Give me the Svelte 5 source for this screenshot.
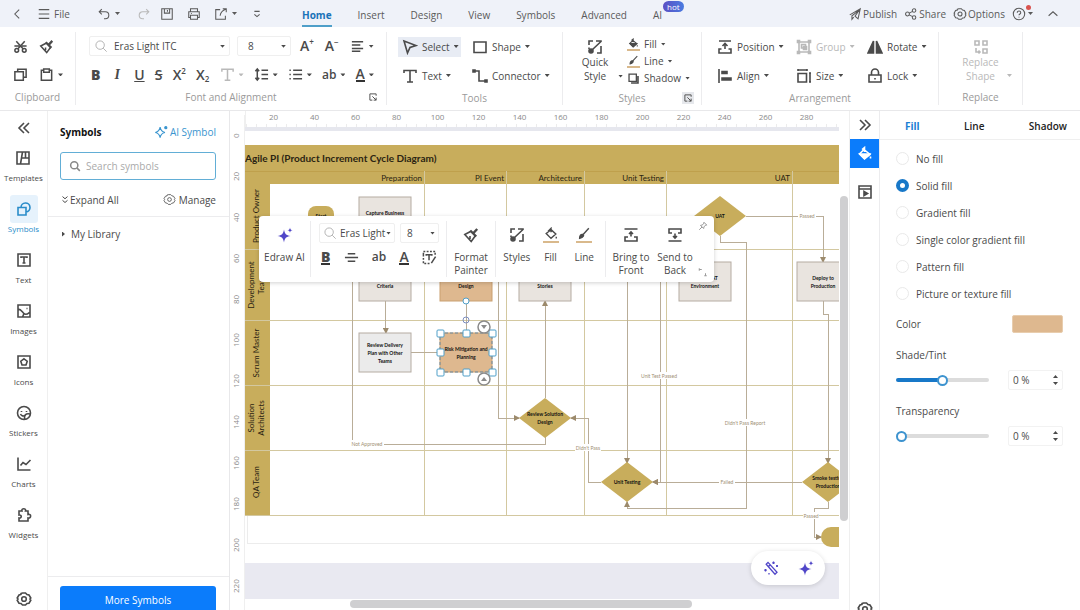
<script lang="ts">
  interface Tool {
    icon: string;
    name: string;
    menu?: boolean;
    off?: boolean;
  }

  const icons: Record<string, string> = {
    back: '<path d="M10.500 3 5.500 8l5 5"/>',
    menu: '<path d="M2 3h12M2 8h12M2 13h12"/>',
    undo: '<path d="M5.500 2.500 2.500 5.500l3 3M3 5.500h6.500a4 4 0 0 1 0 8H8"/>',
    redo: '<path d="m10.500 2.500 3 3-3 3M13 5.500H6.500a4 4 0 0 0 0 8H8"/>',
    save: '<path d="M2 2h12v12H2zM5 2v5h6V2M8.500 3.500v2"/>',
    print: '<path d="M4 5V2h8v3M4 12H2V5.500h12V12h-2M4 9.500h8V14H4zM4.500 7.500h1"/>',
    export: '<path d="M7 3H2v11h11v-4M10 2h4v4M13.500 2.500C9 4 7.500 6 7 10"/>',
    more: '<path d="M5 5h6M5 8.500l3 2.500 3-2.500"/>',
    publish: '<path d="m2 9 12-7-2.500 11.500L8 10.500l5-7-8.500 6.500v4l2-2.500"/>',
    share: '<circle cx="4" cy="8" r="2.200"/><circle cx="11.500" cy="4" r="2"/><circle cx="11.500" cy="12" r="2"/><path d="m6 7 3.800-2M6 9l3.800 2"/>',
    gear: '<path d="M5 2.500 6.500 2h3l1.500 1.500 2 .5 1.800 3-.8 1 .8 1.200-1.800 3-2 .3L9.500 14h-3L5 12.500l-2-.3-1.800-3L2 8l-.8-1L3 4l2-.5z"/><circle cx="8" cy="8" r="2.300"/>',
    help: '<circle cx="8" cy="8" r="6.500"/><path d="M6 6.500c0-2.500 4-2.500 4 0C10 8 8 8 8 9.500M8 11v1"/>',
    up: '<path d="m3 10 5-4.500 5 4.500"/>',
    cut: '<circle cx="4" cy="12" r="2"/><circle cx="12" cy="12" r="2"/><path d="m5.300 10.500 7.200-8M10.700 10.500l-7.200-8M1.500 7.500h5M9.500 7.500h5"/>',
    painter: '<path d="M7.500 4.500 1.800 7.500l6.400 7 4-5.500M7 9v3"/><path d="m7.200 3.500 6 6M10.500 6 14.200 2" stroke-width="2.400"/>',
    copy: '<path d="M2 5h9v9H2zM5 5V2.500h9V11h-3"/>',
    paste: '<path d="M4.500 3.500H2.500V14h11V3.500h-2M5 2h6v3.500H5z"/>',
    search: '<circle cx="7" cy="7" r="4.800"/><path d="m10.500 10.500 4 4"/>',
    align: '<path d="M2 3h12M2 6.500h9M2 10h12M2 13h9"/>',
    center: '<path d="M4 4h8M1 8h14M4 12h8"/>',
    spacing: '<path d="M3.500 2v12M1.500 4.500 3.500 2l2 2.500M1.500 11.500l2 2.500 2-2.500M8 3.500h7M8 8h7M8 12.500h7"/>',
    list: '<path d="M5.500 3.500H15M5.500 8H15M5.500 12.500H15M1.500 3.500H3M1.500 8H3M1.500 12.500H3"/>',
    launcher: '<path d="M13 6V3H3v10h4M7 7l6 6M13 9v4H9"/>',
    pointer: '<path d="m2 2 12 4.500-6 2L5.500 14z"/>',
    rect: '<path d="M2 3h12v10.500H2z"/>',
    text: '<path d="M2 5V2.500h12V5M8 2.500V14M5 14h6"/>',
    connector: '<path d="M2 3h5v10h6"/><path d="M1 2h2v2H1zM13 12h2v2h-2z" fill="currentColor"/>',
    quick: '<path d="M2 6V2h4M9 2h5v1M2 8.500V10M14 7v7h-4M5.500 10.500 14 2.500"/><circle cx="4" cy="12" r="2" fill="currentColor"/>',
    bucket: '<path d="m7 3.500 6 5-5.500 4.500L2.500 8zM7.500 6V1.500L5 3.500M13.500 10.500v2"/><path d="M3 8h9.500l-5 4.500z" fill="currentColor"/>',
    bucketLine: '<path d="m8 3 5.500 5L8 13 2.500 7.500zM8 6V1.500L4.500 5M14 11v2"/>',
    brush: '<path d="m7 8.500 6.500-7"/><path d="M3 13c0-3 1.500-5 3.500-4.500S7.500 12 3 13z" fill="currentColor"/>',
    shadow: '<path d="M2.500 2.500h9v9h-9z"/><path d="M5 13.500h8.500V5" stroke-width="2"/>',
    position: '<path d="M2 2h12M8 10V4.500M5.500 7 8 4.500 10.500 7M4.500 10H2v4h12v-4h-2.500"/>',
    toFront: '<path d="M1.500 2h13M8 9.500V5M6 7l2-2 2 2M5 10H2v4h12v-4h-3"/>',
    toBack: '<path d="M1.500 14h13M8 6.500V11M6 9l2 2 2-2M5 6H2V2h12v4h-3"/>',
    alignLeft: '<path d="M2 1v14"/><path d="M5 3.500h5v2H5zM5 10h9v2H5z" fill="currentColor"/>',
    group: '<path d="M3 3h10v10H3zM1.500 1.500h2v2h-2zM12.500 1.500h2v2h-2zM1.500 12.500h2v2h-2zM12.500 12.500h2v2h-2zM5.500 5.500h4v3.500h-4zM7.500 7.500h3v3h-3z"/>',
    size: '<path d="M2 5.500h8.500V14H2zM2 2h9M2 1v2M11 1v2M14 5v9M13 5h2M13 14h2"/>',
    rotate: '<path d="M6.500 2v12H1zM9.500 2v12H15z" fill="currentColor"/>',
    lock: '<path d="M2 7h12v7H2zM4.500 7V4.500a3.500 3.500 0 0 1 7 0V7M8 10v1.500"/>',
    replace: '<path d="M2 2h4v4H2zM10 2h4v4h-4zM10 10h4v4h-4zM3 9v4h4M5.500 11.500 7 13l-1.500 1.500"/>',
    left2: '<path d="M8 3 3 8l5 5M13 3 8 8l5 5"/>',
    right2: '<path d="m3 3 5 5-5 5M8 3l5 5-5 5"/>',
    templates: '<path d="M2 2h12v12H2zM7.500 2 5.500 14M6.500 8H14M10.500 8V2"/>',
    symbols: '<path d="M2 6.500h8V14H2zM5 6.500a4.500 4.500 0 1 1 5 4.500"/>',
    textBox: '<path d="M2 2h12v12H2zM5 6V5h6v1M8 5v6M6.500 11h3"/>',
    images: '<path d="M2 2h12v12H2zM2 6c3 0 4 2.500 6 4.500s4 0 6-1.500M8 10.500 6.500 14"/><path d="M10.500 5.500h1"/>',
    iconBox: '<path d="M2 2h12v12H2zM8 4.800l3.200 2.400-1.200 3.800H6L4.800 7.200z"/>',
    stickers: '<path d="M14.500 8A6.500 6.500 0 1 0 8 14.500c4 0 6.500-3 6.500-6.500zM14 9c-4-1-6 1-5.500 5M5.500 6v1M10.500 6v1M4.500 9c1 2 3 2.500 4.500 1.500"/>',
    charts: '<path d="M2 1.500V14h12.500M4.500 9.500 7 6.500l3 2L14.500 4"/>',
    widgets: '<path d="M3 4h3c-1-3 4.500-3 3.500 0H12v3.500c3.500-1 3.500 4 0 3.500V14H3v-3c3 .5 3-3.500 0-3z"/>',
    sparkle: '<path d="M7 2.500c.6 4 1.800 5.200 5.500 6-3.700.8-4.900 2-5.500 6-.6-4-1.800-5.200-5.500-6 3.700-.8 4.900-2 5.500-6z"/><circle cx="13.500" cy="3" r="1.200" fill="currentColor"/>',
    star: '<path d="M7 2.500C7.800 7 9 8.200 13.500 9 9 9.800 7.800 11 7 15.500 6.200 11 5 9.800.5 9 5 8.200 6.200 7 7 2.500zM13 .5c.3 2 .8 2.400 2.600 2.700-1.800.3-2.300.8-2.600 2.600-.3-1.800-.8-2.300-2.600-2.600C12.200 2.900 12.700 2.500 13 .5z" fill="currentColor" stroke="none"/>',
    wand: '<path d="m3.200 4.200 1.800-1.800 9 9.800-2 2zM5.500 6.500l1.800-1.800M10.500 1.500v2.500M9.200 2.800h2.600M14 5v2M13 6h2M2.500 9v2.500M1.200 10.200h2.600M6 13v1.500"/>',
    expand: '<path d="m4 2.500 4 3.500 4-3.500M4 8.500l4 3.500 4-3.500"/>',
    textFrame: '<path d="M1.500 5V1.500H14V5M1.500 5v9.500H9" stroke-dasharray="2 1.500"/><path d="M4.500 6V5h6v1M7.500 5v6M14.500 7 10 14"/>',
    play: '<path d="M2 2h12v12H2zM2 5h12"/><path d="m7 7.500 3.500 2L7 11.500z" fill="currentColor"/>',
    pin: '<path d="M9.500 2 14 6.500l-2.500.5-2 2.500L9 12 4 7l2.500-.5L9 4.500zM6.500 9.500 2 14"/>',
    resize: '<path d="M2 2v4M2 4h4M10 14h4M12 10v4"/>',
  };

  const quickTools: Tool[] = [
    { icon: 'undo', name: 'Undo', menu: true },
    { icon: 'redo', name: 'Redo', off: true },
    { icon: 'save', name: 'Save' },
    { icon: 'print', name: 'Print' },
    { icon: 'export', name: 'Export', menu: true },
    { icon: 'more', name: 'Customize' },
  ];

  const tabs = ['Home', 'Insert', 'Design', 'View', 'Symbols', 'Advanced', 'AI'];

  const arrange: Tool[] = [
    { icon: 'position', name: 'Position' },
    { icon: 'group', name: 'Group', off: true },
    { icon: 'rotate', name: 'Rotate' },
    { icon: 'alignLeft', name: 'Align' },
    { icon: 'size', name: 'Size' },
    { icon: 'lock', name: 'Lock' },
  ];

  const rail: Tool[] = [
    { icon: 'templates', name: 'Templates' },
    { icon: 'symbols', name: 'Symbols' },
    { icon: 'textBox', name: 'Text' },
    { icon: 'images', name: 'Images' },
    { icon: 'iconBox', name: 'Icons' },
    { icon: 'stickers', name: 'Stickers' },
    { icon: 'charts', name: 'Charts' },
    { icon: 'widgets', name: 'Widgets' },
  ];

  const fills = ['No fill', 'Solid fill', 'Gradient fill', 'Single color gradient fill', 'Pattern fill', 'Picture or texture fill'];

  const rulerX = Array.from({ length: 14 }, (_, i) => (i + 1) * 20);
  const rulerY = Array.from({ length: 12 }, (_, i) => i * 20);

  // diagram geometry
  const rowLines = [122, 193, 258, 323, 388];
  const columns = [
    { x: 179, label: 'Preparation' },
    { x: 261, label: 'PI Event' },
    { x: 339, label: 'Architecture' },
    { x: 421, label: 'Unit Testing' },
    { x: 547, label: 'UAT' },
  ];
  const lanes = [
    { y: 89, lines: ['Product Owner'] },
    { y: 158, lines: ['Development', 'Team'] },
    { y: 226, lines: ['Scrum Master'] },
    { y: 291, lines: ['Solution', 'Architects'] },
    { y: 355, lines: ['QA Team'] },
  ];
  const boxes = [
    { x: 114, y: 70, kind: 'box', lines: ['Capture Business', 'Needs'] },
    { x: 114, y: 135, kind: 'box', lines: ['Acceptance', 'Criteria'] },
    { x: 195, y: 135, kind: 'tan', lines: ['Solution', 'Design'] },
    { x: 274, y: 135, kind: 'box', lines: ['Design', 'Stories'] },
    { x: 434, y: 135, kind: 'box', lines: ['Create UAT', 'Environment'] },
    { x: 552, y: 135, kind: 'box', lines: ['Deploy to', 'Production'] },
    { x: 114, y: 206, kind: 'pale', lines: ['Review Delivery', 'Plan with Other', 'Teams'] },
    { x: 195, y: 206, kind: 'tan', lines: ['Risk Mitigation and', 'Planning'] },
  ];
  const diamonds = [
    { x: 475, y: 89, lines: ['UAT'] },
    { x: 300, y: 291, lines: ['Review Solution', 'Design'] },
    { x: 382, y: 355, lines: ['Unit Testing'] },
    { x: 583, y: 355, lines: ['Smoke testing', 'Production'] },
  ];
  const arrows = [
    'M140 174L141 206',
    'M253 110V291H274',
    'M300 271V174',
    'M382 110V336',
    'M415 110V355H408',
    'M557 355H408',
    'M356 355H343V291H326',
    'M475 109V115H501V381H382V375',
    'M501 89H578V135',
    'M578 174V187H583V336',
    'M583 375V381H569V410H576',
  ];
  const lines = ['M107 110V317H300V310', 'M166 225H195', 'M221 174V206'];
  const notes = [
    { x: 562, y: 89, w: 18, text: 'Passed' },
    { x: 414, y: 249, w: 40, text: 'Unit Test Passed' },
    { x: 500, y: 296, w: 44, text: "Didn't Pass Report" },
    { x: 343, y: 321, w: 26, text: "Didn't Pass" },
    { x: 482, y: 355, w: 16, text: 'Failed' },
    { x: 566, y: 389, w: 16, text: 'Passed' },
    { x: 122, y: 317, w: 34, text: 'Not Approved' },
  ];
  const handles = [[195, 206], [221, 206], [247, 206], [195, 225], [247, 225], [195, 245], [221, 245], [247, 245]];

  let activeTab = $state('Home');
  let activeRail = $state('Symbols');
  let activeProp = $state('Fill');
  let fill = $state('Solid fill');
  let shade = $state(0);
  let transparency = $state(0);
  let query = $state('');

  const clamp = (v: number, min: number, max: number) => Math.min(max, Math.max(min, v));
</script>

{#snippet icon(name: string, cls = '')}
  <svg class="icon {cls}" viewBox="0 0 16 16" aria-hidden="true">{@html icons[name]}</svg>
{/snippet}

{#snippet caret()}
  <span class="caret"></span>
{/snippet}

{#snippet amount(label: string, value: number, step: (d: number) => void)}
  <div class="amount">
    <input type="text" aria-label="{label} value" value="{value} %" readonly />
    <div class="steps">
      <button aria-label="Increase {label}" onclick={() => step(1)}><span class="caret flip"></span></button>
      <button aria-label="Decrease {label}" onclick={() => step(-1)}>{@render caret()}</button>
    </div>
  </div>
{/snippet}

<div class="app">
  <header class="titlebar">
    <button class="back" aria-label="Back">{@render icon('back')}</button>
    <button class="file">{@render icon('menu')}File</button>
    <div class="quick">
      {#each quickTools as tool}
        <button class:off={tool.off} aria-label={tool.name}>
          {@render icon(tool.icon)}{#if tool.menu}{@render caret()}{/if}
        </button>
      {/each}
    </div>
    <nav class="tabs">
      {#each tabs as tab}
        <button class:active={activeTab === tab} onclick={() => (activeTab = tab)}>
          {tab}{#if tab === 'AI'}<span class="hot">hot</span>{/if}
        </button>
      {/each}
    </nav>
    <div class="account">
      <button>{@render icon('publish')}Publish</button>
      <button>{@render icon('share')}Share</button>
      <button>{@render icon('gear')}Options</button>
      <button class="help" aria-label="Help">{@render icon('help')}{@render caret()}<i class="dot"></i></button>
      <button class="collapse" aria-label="Collapse ribbon">{@render icon('up')}</button>
    </div>
  </header>

  <section class="ribbon">
    <div class="group clipboard">
      <div class="row">
        <button aria-label="Cut">{@render icon('cut')}</button>
        <button aria-label="Format painter">{@render icon('painter')}</button>
      </div>
      <div class="row">
        <button aria-label="Copy">{@render icon('copy')}</button>
        <button aria-label="Paste">{@render icon('paste')}{@render caret()}</button>
      </div>
      <div class="title">Clipboard</div>
    </div>

    <div class="group font">
      <div class="row">
        <div class="select family">
          {@render icon('search')}
          <select aria-label="Font family"><option>Eras Light ITC</option></select>
          {@render caret()}
        </div>
        <div class="select size">
          <select aria-label="Font size"><option>8</option></select>
          {@render caret()}
        </div>
        <button class="glyph" aria-label="Increase font size">A<sup>+</sup></button>
        <button class="glyph" aria-label="Decrease font size">A<sup>−</sup></button>
        <button aria-label="Alignment">{@render icon('align')}{@render caret()}</button>
      </div>
      <div class="row formats">
        <button class="glyph" aria-label="Bold"><b>B</b></button>
        <button class="glyph" aria-label="Italic"><i>I</i></button>
        <button class="glyph" aria-label="Underline"><u>U</u></button>
        <button class="glyph" aria-label="Strikethrough"><s>S</s></button>
        <button class="glyph" aria-label="Superscript">X<sup>2</sup></button>
        <button class="glyph" aria-label="Subscript">X<sub>2</sub></button>
        <button class="off" aria-label="Text direction">{@render icon('text')}{@render caret()}</button>
        <button aria-label="Line spacing">{@render icon('spacing')}{@render caret()}</button>
        <button aria-label="Bullets">{@render icon('list')}{@render caret()}</button>
        <button class="glyph case" aria-label="Case">ab{@render caret()}</button>
        <button class="glyph" aria-label="Font color"><span class="inked">A</span>{@render caret()}</button>
      </div>
      <div class="title">Font and Alignment<button class="launch" aria-label="Font settings">{@render icon('launcher')}</button></div>
    </div>

    <div class="group tools">
      <div class="grid">
        <button class="tool picked">{@render icon('pointer')}Select{@render caret()}</button>
        <button class="tool">{@render icon('rect')}Shape{@render caret()}</button>
        <button class="tool">{@render icon('text')}Text{@render caret()}</button>
        <button class="tool">{@render icon('connector')}Connector{@render caret()}</button>
      </div>
      <div class="title">Tools</div>
    </div>

    <div class="group styles">
      <div class="split">
        <button class="tall">{@render icon('quick')}<span>Quick</span><span>Style{@render caret()}</span></button>
        <div class="stack">
          <button class="tool">{@render icon('bucket', 'under')}Fill{@render caret()}</button>
          <button class="tool">{@render icon('brush', 'under')}Line{@render caret()}</button>
          <button class="tool">{@render icon('shadow')}Shadow{@render caret()}</button>
        </div>
      </div>
      <div class="title">Styles<button class="launch shaded" aria-label="Style settings">{@render icon('launcher')}</button></div>
    </div>

    <div class="group arrange">
      <div class="grid">
        {#each arrange as tool}
          <button class="tool" class:off={tool.off}>{@render icon(tool.icon)}{tool.name}{@render caret()}</button>
        {/each}
      </div>
      <div class="title">Arrangement</div>
    </div>

    <div class="group replace">
      <button class="tall off">{@render icon('replace')}<span>Replace</span><span>Shape{@render caret()}</span></button>
      <div class="title">Replace</div>
    </div>
  </section>

  <div class="work">
    <nav class="rail">
      <button class="fold" aria-label="Collapse panel">{@render icon('left2')}</button>
      {#each rail as item}
        <button class="item" class:active={activeRail === item.name} onclick={() => (activeRail = item.name)}>
          <span class="tile">{@render icon(item.icon)}</span>
          {item.name}
        </button>
      {/each}
      <button class="settings" aria-label="Settings">{@render icon('gear')}</button>
    </nav>

    <aside class="symbols">
      <div class="head">
        <h2>Symbols</h2>
        <a href="#ai">{@render icon('sparkle')}AI Symbol</a>
      </div>
      <label class="search">
        {@render icon('search')}
        <input type="text" placeholder="Search symbols" aria-label="Search symbols" bind:value={query} />
      </label>
      <div class="actions">
        <button>{@render icon('expand', 'small')}Expand All</button>
        <button>{@render icon('gear')}Manage</button>
      </div>
      <div class="library">
        <button><span class="caret side-caret"></span>My Library</button>
      </div>
      <div class="foot"><button>More Symbols</button></div>
    </aside>

    <main class="canvas">
      <div class="ruler-x">
        {#each rulerX as n}<span>{n}</span>{/each}
      </div>
      <div class="ruler-y">
        {#each rulerY as n}<span>{n}</span>{/each}
      </div>
      <div class="sheet">
        <svg class="diagram" role="img" aria-label="Agile PI diagram">
          <defs>
            <marker id="arrow" viewBox="0 0 6 6" refX="5" refY="3" markerWidth="6" markerHeight="6" orient="auto-start-reverse">
              <path d="M0 0 6 3 0 6z" fill="#9c8a6c" />
            </marker>
          </defs>
          <rect width="100%" height="4" fill="#e6e7ee" />
          <rect y="436" width="100%" height="100%" fill="#e9e9f1" />
          <path class="page-edge" d="M2 388V416H590" />

          <rect class="band" y="18" width="100%" height="39" />
          <rect class="band" y="57" width="25" height="331" />
          <text class="name" x="0" y="35">Agile PI (Product Increment Cycle Diagram)</text>
          <path class="edge" d="M0 44H2000" />
          {#each rowLines as y}<path class="lane-line" d="M0 {y}H2000" />{/each}
          {#each columns as col}
            <path class="lane-line" d="M{col.x} 44V388" />
            <text class="lane" x={col.x - 2} y="54" text-anchor="end">{col.label}</text>
          {/each}
          {#each lanes as lane}
            {#each lane.lines as line, i}
              <text class="lane" transform="translate({14 + (i * 2 - lane.lines.length + 1) * 5} {lane.y}) rotate(-90)" text-anchor="middle">{line}</text>
            {/each}
          {/each}

          {#each lines as d}<path class="link" {d} />{/each}
          {#each arrows as d}<path class="link" {d} marker-end="url(#arrow)" />{/each}

          <rect class="band" x="63" y="79" width="26" height="20" rx="8" />
          <text class="tag" x="76" y="91">Start</text>
          <rect class="band" x="576" y="400" width="52" height="20" rx="10" />

          {#each boxes as b}
            <rect class={b.kind} x={b.x} y={b.y} width="52" height="39" />
            {#each b.lines as line, i}
              <text class="tag" x={b.x + 26} y={b.y + 22 + (i * 2 - b.lines.length + 1) * 4}>{line}</text>
            {/each}
          {/each}
          {#each diamonds as d}
            <path class="band" d="M{d.x - 26} {d.y}l26-20 26 20-26 20z" />
            {#each d.lines as line, i}
              <text class="tag" x={d.x} y={d.y + 2 + (i * 2 - d.lines.length + 1) * 4}>{line}</text>
            {/each}
          {/each}
          {#each notes as n}
            <rect x={n.x - n.w / 2} y={n.y - 4} width={n.w} height="7" fill="#fff" />
            <text class="note" x={n.x} y={n.y + 2}>{n.text}</text>
          {/each}

          <circle class="handle" cx="221" cy="174" r="3" />
          <circle class="spin" cx="221" cy="193" r="3" />
          <rect class="outline" x="195" y="206" width="52" height="39" />
          {#each handles as [x, y]}
            <rect class="handle" x={x - 3} y={y - 3} width="7" height="7" rx="1" />
          {/each}
          <g class="nudge">
            <circle cx="239" cy="200" r="6" /><path d="M236 198h6l-3 4z" />
            <circle cx="239" cy="252" r="6" /><path d="M236 254h6l-3-4z" />
          </g>
        </svg>
      </div>
      <div class="track-y"><div class="thumb"></div></div>
      <div class="track-x"><div class="thumb"></div></div>

      <div class="floater">
        <button class="big ai">{@render icon('star')}<span>Edraw AI</span></button>
        <div class="fonts">
          <div class="row">
            <div class="select family">
              {@render icon('search')}
              <select aria-label="Shape font"><option>Eras Light</option></select>
              {@render caret()}
            </div>
            <div class="select size">
              <select aria-label="Shape font size"><option>8</option></select>
              {@render caret()}
            </div>
          </div>
          <div class="row marks">
            <button class="glyph" aria-label="Shape bold"><b class="inked">B</b></button>
            <button aria-label="Center text">{@render icon('center')}</button>
            <button class="glyph case" aria-label="Shape case">ab</button>
            <button class="glyph" aria-label="Shape font color"><span class="inked">A</span></button>
            <button aria-label="Text frame">{@render icon('textFrame')}</button>
          </div>
        </div>
        <button class="big painter">{@render icon('painter')}<span>Format Painter</span></button>
        <div class="trio">
          <button class="big">{@render icon('quick')}<span>Styles</span></button>
          <button class="big">{@render icon('bucketLine', 'under')}<span>Fill</span></button>
          <button class="big">{@render icon('brush', 'under')}<span>Line</span></button>
        </div>
        <div class="order">
          <button class="big">{@render icon('toFront')}<span>Bring to Front</span></button>
          <button class="big">{@render icon('toBack')}<span>Send to Back</span></button>
        </div>
        <div class="corner">
          <button aria-label="Pin">{@render icon('pin', 'small')}</button>
          <button aria-label="Resize">{@render icon('resize', 'small')}</button>
        </div>
      </div>

      <div class="assist">
        <button aria-label="Magic wand">{@render icon('wand')}</button>
        <button aria-label="AI assistant">{@render icon('star')}</button>
      </div>
    </main>

    <nav class="side">
      <button aria-label="Collapse properties">{@render icon('right2')}</button>
      <button class="active" aria-label="Fill and style">{@render icon('bucket')}</button>
      <button class="play" aria-label="Presentation">{@render icon('play')}</button>
      <button class="settings" aria-label="Panel settings">{@render icon('gear')}</button>
    </nav>

    <aside class="props">
      <div class="prop-tabs">
        {#each ['Fill', 'Line', 'Shadow'] as tab}
          <button class:active={activeProp === tab} onclick={() => (activeProp = tab)}>{tab}</button>
        {/each}
      </div>
      <div class="prop-body">
        {#each fills as option}
          <label class="option"><input type="radio" name="fill" value={option} bind:group={fill} />{option}</label>
        {/each}
        <div class="color">
          <span>Color</span>
          <button aria-label="Fill color"></button>
        </div>
        <label for="shade">Shade/Tint</label>
        <div class="slider">
          <input id="shade" type="range" min="-100" max="100" bind:value={shade} style="--pos: {(shade + 100) / 2}%" />
          {@render amount('Shade/Tint', shade, d => (shade = clamp(shade + d, -100, 100)))}
        </div>
        <label for="transparency">Transparency</label>
        <div class="slider">
          <input id="transparency" type="range" min="0" max="100" bind:value={transparency} style="--pos: {transparency}%" />
          {@render amount('Transparency', transparency, d => (transparency = clamp(transparency + d, 0, 100)))}
        </div>
      </div>
    </aside>
  </div>
</div>

<style>
  :global(body) {
    margin: 0;
  }
  .app {
    display: flex;
    flex-direction: column;
    height: 100vh;
    overflow: hidden;
    background: #fff;
    color: #4a4a4a;
    font-family: "Open Sans", "Noto Sans", sans-serif;
    font-size: 10px;
    line-height: 14px;
  }
  .app * {
    box-sizing: border-box;
  }
  button,
  input,
  select {
    font: inherit;
    color: inherit;
    border: 0;
    padding: 0;
    margin: 0;
    background: none;
  }
  button {
    display: flex;
    align-items: center;
    white-space: nowrap;
  }
  .icon {
    width: 16px;
    height: 16px;
    flex: none;
    fill: none;
    stroke: currentColor;
    stroke-width: 1.6;
  }
  .icon.small {
    width: 10px;
    height: 10px;
  }
  .icon.under {
    border-bottom: 2px solid #d9b98c;
  }
  .caret {
    flex: none;
    width: 5px;
    height: 3px;
    margin-left: 4px;
    background: currentColor;
    clip-path: polygon(0 0, 100% 0, 50% 100%);
  }
  .caret.flip {
    clip-path: polygon(0 100%, 100% 100%, 50% 0);
  }
  .caret.side-caret {
    width: 3px;
    height: 5px;
    margin: 0 6px 0 2px;
    clip-path: polygon(0 0, 100% 50%, 0 100%);
  }

  /* title bar */
  .titlebar {
    display: flex;
    flex: none;
    height: 27px;
    background: #eff2f9;
    color: #5a5a5a;
  }
  .titlebar .icon {
    width: 14px;
    height: 14px;
    stroke-width: 1.2;
  }
  .back {
    width: 37px;
    padding-left: 10px;
  }
  .file {
    gap: 3px;
    width: 46px;
  }
  .quick {
    display: flex;
    gap: 13px;
    width: 205px;
    padding-left: 14px;
  }
  .quick button:nth-child(2) {
    margin: 0 -4px 0 4px;
  }
  .tabs {
    display: flex;
    gap: 26px;
    padding-left: 14px;
  }
  .tabs button {
    position: relative;
    padding-top: 2px;
  }
  .tabs .active {
    color: #1a73b8;
    font-weight: 700;
    box-shadow: inset 0 -2px #4f9fc9;
  }
  .hot {
    position: absolute;
    left: 10px;
    top: 1px;
    padding: 0 4px;
    border-radius: 6px;
    background: linear-gradient(90deg, #5b4fc4, #4a7be0);
    color: #fff;
    font-size: 8px;
    line-height: 11px;
  }
  .account {
    display: flex;
    gap: 7px;
    margin-left: auto;
    padding-right: 20px;
  }
  .account button {
    gap: 1px;
  }
  .help {
    position: relative;
  }
  .help .caret {
    margin-left: 1px;
  }
  .dot {
    position: absolute;
    right: 2px;
    top: 5px;
    width: 5px;
    height: 5px;
    border-radius: 50%;
    background: #d9534f;
  }
  .account .collapse {
    margin-left: 6px;
  }

  /* ribbon */
  .ribbon {
    display: flex;
    flex: none;
    height: 84px;
    border-bottom: 1px solid #e8e8ea;
  }
  .group {
    display: flex;
    flex-direction: column;
    flex: none;
    margin: 5px 0;
    border-right: 1px solid #ececee;
  }
  .row {
    display: flex;
    align-items: center;
    height: 29px;
  }
  .title {
    display: flex;
    align-items: center;
    justify-content: center;
    position: relative;
    height: 16px;
    color: #9a9a9a;
  }
  .launch {
    position: absolute;
    right: 7px;
    padding: 1px;
  }
  .title .launch .icon {
    width: 10px;
    height: 10px;
    color: #555;
  }
  .shaded {
    background: #e6e8ec;
  }
  .clipboard {
    width: 76px;
  }
  .clipboard .row {
    padding-left: 13px;
    gap: 11px;
  }
  .clipboard .icon,
  .font .icon {
    width: 15px;
    height: 15px;
  }
  .font {
    width: 311px;
  }
  .font .row {
    gap: 7px;
    padding-left: 13px;
  }
  .font .formats {
    gap: 0;
    justify-content: space-between;
    padding: 0 12px 0 15px;
  }
  .select {
    display: flex;
    align-items: center;
    height: 20px;
    padding: 0 4px;
    border: 1px solid #efefef;
    border-radius: 2px;
  }
  .select .icon {
    width: 14px;
    height: 14px;
    color: #aaa;
    stroke-width: 1;
  }
  .select select {
    flex: 1;
    min-width: 0;
    padding-left: 6px;
    appearance: none;
  }
  .font .family {
    width: 141px;
  }
  .font .size {
    width: 54px;
    margin-right: 2px;
  }
  .glyph {
    font-size: 14px;
    font-weight: 600;
    line-height: 16px;
  }
  .glyph sup,
  .glyph sub {
    font-size: 8px;
    line-height: 8px;
    align-self: flex-start;
  }
  .glyph sub {
    align-self: flex-end;
  }
  .font .row:first-child .glyph {
    margin-right: 4px;
  }
  .glyph i {
    font-family: "Liberation Serif", serif;
    padding: 0 4px;
  }
  .case {
    font-size: 12px;
  }
  .inked {
    border-bottom: 2px solid #333;
    line-height: 13px;
  }
  .tool {
    gap: 4px;
  }
  .tool .caret {
    margin-left: 0;
  }
  .grid {
    display: grid;
    align-items: center;
    grid-auto-rows: 29px;
    height: 58px;
  }
  .tools {
    width: 176px;
  }
  .tools .grid {
    grid-template-columns: 74px 1fr;
    padding-left: 11px;
  }
  .tools .tool {
    height: 20px;
    padding-left: 4px;
    margin-right: 11px;
  }
  .tools .tool:nth-child(even) {
    padding-left: 0;
    margin-right: 0;
  }
  .picked {
    background: #e8ecf4;
  }
  .styles {
    width: 139px;
  }
  .split {
    display: flex;
    height: 58px;
  }
  .tall {
    flex-direction: column;
    justify-content: center;
    height: 58px;
  }
  .tall span {
    display: flex;
    align-items: center;
  }
  .tall span .caret {
    margin-left: 12px;
    margin-right: -17px;
  }
  .styles .tall {
    width: 64px;
  }
  .stack {
    display: flex;
    flex-direction: column;
    justify-content: center;
    gap: 3px;
  }
  .stack .icon {
    width: 13px;
    height: 13px;
  }
  .arrange {
    width: 237px;
  }
  .arrange .grid {
    grid-template-columns: 79px 71px 1fr;
    padding-left: 15px;
  }
  .replace {
    width: 84px;
  }
  .off {
    color: #b9b9b9;
  }

  /* workspace */
  .work {
    display: flex;
    flex: 1;
    min-height: 0;
  }
  .rail {
    display: flex;
    flex-direction: column;
    align-items: center;
    width: 48px;
    border-right: 1px solid #efefef;
    font-size: 8px;
  }
  .fold {
    height: 33px;
  }
  .item {
    flex-direction: column;
    flex: none;
    height: 51px;
    line-height: 11px;
  }
  .tile {
    display: flex;
    padding: 6px;
  }
  .item.active {
    color: #2a8cc9;
  }
  .item.active .tile {
    border-radius: 3px;
    background: #e6f2fc;
  }
  .rail .settings,
  .side .settings {
    margin-top: auto;
  }
  .rail .settings {
    padding-bottom: 3px;
  }
  .symbols {
    display: flex;
    flex-direction: column;
    width: 182px;
    border-right: 1px solid #e8e8ea;
  }
  .head,
  .actions {
    display: flex;
    align-items: center;
    justify-content: space-between;
    padding: 0 13px 0 12px;
  }
  .head {
    height: 41px;
  }
  h2 {
    margin: 0;
    color: #111;
    font-size: 10px;
    font-weight: 700;
  }
  .head a {
    display: flex;
    align-items: center;
    gap: 2px;
    color: #3a95cf;
    text-decoration: none;
  }
  .head .icon {
    width: 14px;
    height: 14px;
    stroke-width: 1.3;
  }
  .search {
    display: flex;
    align-items: center;
    gap: 5px;
    height: 28px;
    margin: 0 13px 0 12px;
    padding: 0 8px;
    border: 1px solid #62aed6;
    border-radius: 3px;
    color: #888;
  }
  .search .icon {
    width: 12px;
    height: 12px;
    stroke-width: 2;
  }
  .search input {
    flex: 1;
    min-width: 0;
    outline: 0;
  }
  .search input::placeholder {
    color: #aaa;
  }
  .actions {
    height: 37px;
    padding-top: 3px;
    border-bottom: 1px solid #ececee;
  }
  .actions .icon:not(.small) {
    width: 13px;
    height: 13px;
    margin-right: 3px;
    stroke-width: 1;
  }
  .library {
    flex: 1;
    padding: 10px 12px;
  }
  .foot {
    flex: none;
    height: 34px;
    padding: 9px 13px 0 12px;
    border-top: 1px solid #ececee;
    overflow: hidden;
  }
  .foot button {
    justify-content: center;
    width: 100%;
    height: 28px;
    border-radius: 3px;
    background: #0b7cfb;
    color: #fff;
  }

  /* canvas */
  .canvas {
    position: relative;
    display: grid;
    grid-template-columns: 15px 1fr 10px;
    grid-template-rows: 16px 1fr 11px;
    flex: 1;
    min-width: 0;
    border-right: 1px solid #efefef;
    color: #8a8a8a;
    font-size: 8px;
    line-height: 12px;
  }
  .ruler-x {
    grid-column: 2;
    display: flex;
    padding-left: 7px;
    overflow: hidden;
    border-left: 1px solid #efefef;
    background: repeating-linear-gradient(90deg, #ececec 0 1px, transparent 1px 10px) bottom / 100% 3px no-repeat;
  }
  .ruler-x span {
    flex: 0 0 41px;
    text-align: center;
  }
  .ruler-y {
    grid-column: 1;
    grid-row: 2 / 4;
    display: flex;
    flex-direction: column;
    overflow: hidden;
    margin-top: -12px;
    border-right: 1px solid #efefef;
  }
  .ruler-y span {
    flex: 0 0 41px;
    writing-mode: vertical-rl;
    transform: rotate(180deg);
    text-align: center;
  }
  .sheet {
    grid-column: 2;
    grid-row: 2;
    overflow: hidden;
  }
  .diagram {
    display: block;
    width: 100%;
    height: 100%;
  }
  .diagram text {
    font-family: Lato, "Open Sans", sans-serif;
    fill: #2b2412;
  }
  .diagram .name {
    font-size: 10px;
    font-weight: 700;
  }
  .diagram .lane {
    font-size: 8px;
  }
  .diagram .tag {
    font-size: 5px;
    font-weight: 700;
    text-anchor: middle;
    fill: #111;
  }
  .diagram .note {
    font-size: 5px;
    text-anchor: middle;
    fill: #a08f75;
  }
  .band {
    fill: #c8ad5c;
  }
  .edge,
  .lane-line,
  .link,
  .page-edge {
    fill: none;
    stroke: #d3c8a0;
    shape-rendering: crispEdges;
  }
  .edge {
    stroke: #bfa04c;
  }
  .page-edge {
    stroke: #ececec;
  }
  .link {
    stroke: #b9ad98;
  }
  .box,
  .pale,
  .tan {
    fill: #e9e4df;
    stroke: #b5aca2;
  }
  .pale {
    fill: #ebebeb;
  }
  .tan {
    fill: #deb88f;
    stroke: #c9a070;
  }
  .outline {
    fill: none;
    stroke: #6b8ba4;
    stroke-dasharray: 3 2;
  }
  .handle {
    fill: #fff;
    stroke: #4f9fc9;
  }
  .spin {
    fill: none;
    stroke: #7d8fc0;
  }
  .nudge circle {
    fill: #fff;
    stroke: #8a8a8a;
    stroke-width: 1.5;
  }
  .nudge path {
    fill: #8a8a8a;
  }
  .track-y {
    grid-column: 3;
    grid-row: 2;
    padding: 69px 1px 0;
  }
  .track-y .thumb {
    height: 325px;
    border-radius: 4px;
    background: #cfcfd1;
  }
  .track-x {
    grid-column: 2;
    grid-row: 3;
    padding: 1px 0 2px 105px;
  }
  .track-x .thumb {
    width: 70%;
    height: 8px;
    border-radius: 4px;
    background: #cfcfd1;
  }

  /* floating toolbar */
  .floater {
    position: absolute;
    left: 29px;
    top: 105px;
    display: flex;
    height: 66px;
    border-radius: 4px;
    background: #fff;
    box-shadow: 0 1px 4px rgba(0, 0, 0, 0.18);
    color: #4a4a4a;
    font-size: 10px;
    line-height: 13px;
  }
  .floater > * {
    margin: 5px 0;
  }
  .big {
    flex-direction: column;
    gap: 8px;
    padding-top: 6px;
    white-space: normal;
    text-align: center;
  }
  .ai {
    width: 51px;
  }
  .ai .icon,
  .assist button {
    color: #5046c8;
  }
  .fonts {
    width: 137px;
    padding: 0 7px 0 8px;
    border: solid #ececee;
    border-width: 0 1px;
  }
  .fonts .row {
    gap: 5px;
    height: 24px;
  }
  .fonts .row .select {
    padding: 0 3px;
  }
  .fonts .select select {
    padding-left: 3px;
  }
  .fonts .select .caret {
    margin-left: 0;
  }
  .fonts .family {
    width: 77px;
  }
  .fonts .size {
    width: 40px;
  }
  .fonts .marks {
    justify-content: space-between;
    padding: 0 2px;
  }
  .fonts .marks .icon {
    width: 15px;
    height: 15px;
  }
  .painter {
    width: 48px;
    padding-left: 5px;
    padding-right: 5px;
  }
  .trio,
  .order {
    display: flex;
    border-left: 1px solid #ececee;
  }
  .trio {
    width: 110px;
    padding: 0 4px;
  }
  .trio .big {
    flex: 1;
  }
  .order {
    width: 93px;
    padding-left: 3px;
  }
  .order .big {
    width: 44px;
  }
  .corner {
    display: flex;
    flex-direction: column;
    justify-content: space-between;
    width: 16px;
    color: #999;
  }
  .assist {
    position: absolute;
    right: 24px;
    bottom: 25px;
    display: flex;
    height: 34px;
    padding: 0 2px;
    border-radius: 17px;
    background: #fff;
    box-shadow: 0 1px 5px rgba(0, 0, 0, 0.15);
  }
  .assist button {
    width: 35px;
    justify-content: center;
  }
  .assist .icon {
    stroke-width: 1.3;
  }

  /* right side */
  .side {
    display: flex;
    flex-direction: column;
    width: 30px;
    border-right: 1px solid #ececee;
    overflow: hidden;
  }
  .side button {
    flex: none;
    justify-content: center;
    height: 28px;
  }
  .side .active {
    height: 29px;
    background: #0b7cfb;
    color: #fff;
  }
  .side .play {
    height: 48px;
  }
  .side .settings {
    height: 16px;
    margin-bottom: -7px;
  }
  .props {
    width: 200px;
  }
  .prop-tabs {
    display: flex;
    justify-content: space-between;
    height: 29px;
    padding: 2px 13px 0 25px;
    border-bottom: 1px solid #efefef;
    color: #222;
    font-weight: 600;
  }
  .prop-tabs .active {
    color: #1a7fd4;
    font-weight: 700;
  }
  .prop-body {
    padding: 5px 17px 0 16px;
  }
  .option {
    display: flex;
    align-items: center;
    gap: 7px;
    height: 27px;
  }
  .option input {
    appearance: none;
    width: 13px;
    height: 13px;
    border: 1px solid #e9e9e9;
    border-radius: 50%;
  }
  .option input:checked {
    border: 4px solid #1878c8;
  }
  .color {
    display: flex;
    align-items: center;
    justify-content: space-between;
    height: 34px;
    margin-bottom: 7px;
  }
  .color button {
    width: 51px;
    height: 18px;
    border: 1px solid #e8cdae;
    border-radius: 2px;
    background: #deb88f;
  }
  .slider {
    display: flex;
    align-items: center;
    justify-content: space-between;
    height: 22px;
    margin: 7px 0 13px;
  }
  input[type='range'] {
    appearance: none;
    width: 93px;
    height: 4px;
    border-radius: 2px;
    background: linear-gradient(#1878c8, #1878c8) left / var(--pos) 100% no-repeat #dcdcdc;
  }
  input[type='range']::-webkit-slider-thumb {
    appearance: none;
    width: 11px;
    height: 11px;
    border: 2px solid #3d93cf;
    border-radius: 50%;
    background: #fff;
  }
  .amount {
    display: flex;
    width: 55px;
    height: 20px;
    padding: 0 4px;
    border: 1px solid #f2f2f2;
    border-radius: 2px;
  }
  .amount input {
    flex: 1;
    min-width: 0;
  }
  .steps {
    display: flex;
    flex-direction: column;
    justify-content: space-evenly;
  }
  .steps .caret {
    margin: 0;
  }
</style>
